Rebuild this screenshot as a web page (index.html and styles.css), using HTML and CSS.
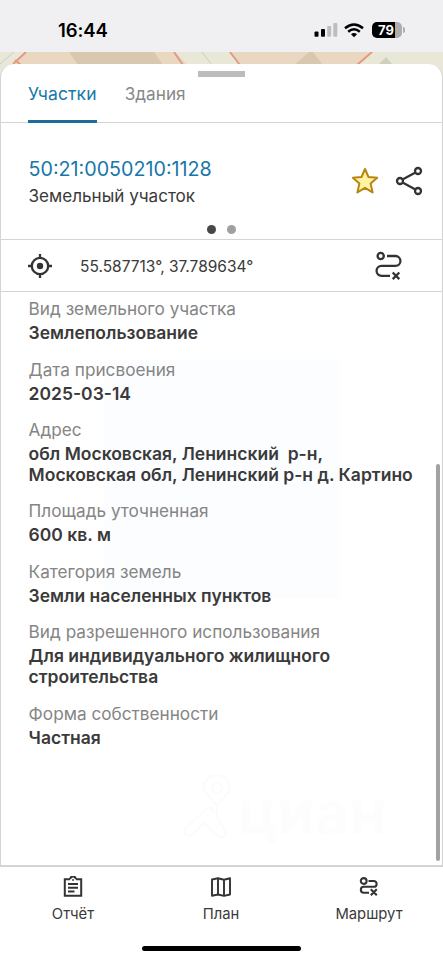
FILE: index.html
```html
<!DOCTYPE html>
<html lang="ru">
<head>
<meta charset="utf-8">
<meta name="viewport" content="width=device-width, initial-scale=1">
<title>Земельный участок</title>
<link rel="stylesheet" href="styles.css">
</head>
<body>
<div class="screen">
  <header class="status">
    <span class="time">16:44</span>
    <div class="indicators">
      <svg class="signal" width="24" height="16" viewBox="0 0 24 16"><rect x="0.5" y="9.5" width="4" height="5.2" rx="1"/><rect x="7" y="7" width="4" height="7.7" rx="1"/><g fill="#bdbdbe"><rect x="13.2" y="4" width="4" height="10.7" rx="1"/><rect x="19.3" y="1" width="4" height="13.7" rx="1"/></g></svg>
      <svg class="wifi" width="20" height="15" viewBox="0 0 20 15" fill="none" stroke="#000" stroke-width="2.5"><path d="M1 5.3Q10-2.4 19 5.3M4.2 8.8Q10 3.8 15.8 8.8"/><path d="M10 14.3 7 11.3Q10 8.9 13 11.3Z" fill="#000" stroke="none"/></svg>
      <div class="battery"><span class="level">79</span></div>
    </div>
  </header>
  <div class="map">
    <svg width="443" height="40" viewBox="0 0 443 40">
      <path fill="#e9e8d8" d="M0 0H443V40H0z"/>
      <path fill="#e9d7c2" d="M26 0H175L188 13V40H0V23zM230 0H372L358 13H242z"/>
      <path fill="#d9c8b0" d="M69 0H154L163 13H78zM294 13 309 0H313L323 13z"/>
      <path fill="#cfd0bd" d="m378 13 8-8 7 8z"/>
      <path fill="none" stroke="#e39a7f" stroke-width="2" d="M26 0 13 12M15 8l6 5M174 0l9 13M230 0l10 13M372 0l-15 13"/>
      <path fill="none" stroke="#cdcebb" d="M14 0 0 12M202 0l10 13"/>
    </svg>
  </div>
  <main class="sheet">
    <div class="handle"></div>
    <nav class="tabs"><span class="tab active">Участки</span><span class="tab">Здания</span></nav>
    <section class="object">
      <div class="object-row">
        <div class="title"><div class="number">50:21:0050210:1128</div><div class="kind">Земельный участок</div></div>
        <svg class="star" width="28" height="28" viewBox="0 0 28 28"><path d="m14 2 3.5 8 8.7.8-6.6 5.8 2 8.8-7.6-4.6-7.6 4.6 2-8.8-6.6-5.8 8.7-.8z" fill="#fff3a6" stroke="#b8860f" stroke-width="2" stroke-linejoin="round"/></svg>
        <svg class="share" width="28" height="30" viewBox="0 0 28 30" fill="none" stroke="#333" stroke-width="2.3"><circle cx="5" cy="15" r="3"/><circle cx="23" cy="5" r="3"/><circle cx="23" cy="25" r="3"/><path d="M8 13.3 20 6.7M8 16.7l12 6.6"/></svg>
      </div>
      <div class="dots"><i class="dot current"></i><i class="dot"></i></div>
    </section>
    <section class="coords">
      <svg class="target" width="24" height="24" viewBox="0 0 24 24" fill="none" stroke="#333" stroke-width="2.3"><circle cx="12" cy="12" r="8.2"/><circle cx="12" cy="12" r="3.2" fill="#333" stroke="none"/><path d="M12 0v4M12 20v4M0 12h4M20 12h4"/></svg>
      <span class="point">55.587713°, 37.789634°</span>
      <svg class="route" width="28" height="30" viewBox="0 0 28 30" fill="none" stroke="#333" stroke-width="2.3"><circle cx="5.7" cy="5" r="3.1"/><path d="M12 5h8.5a4.9 4.9 0 0 1 0 9.9H6.5a4.9 4.9 0 0 0 0 9.9H15M17.7 21.5l6.6 6.6M24.3 21.5l-6.6 6.6"/></svg>
    </section>
    <section class="details">
      <div class="tint"></div>
      <dl>
        <div class="item"><dt>Вид земельного участка</dt><dd>Землепользование</dd></div>
        <div class="item"><dt>Дата присвоения</dt><dd>2025-03-14</dd></div>
        <div class="item"><dt>Адрес</dt><dd>обл Московская, Ленинский&nbsp; р-н,<br>Московская обл, Ленинский р-н д. Картино</dd></div>
        <div class="item"><dt>Площадь уточненная</dt><dd>600 кв. м</dd></div>
        <div class="item"><dt>Категория земель</dt><dd>Земли населенных пунктов</dd></div>
        <div class="item"><dt>Вид разрешенного использования</dt><dd>Для индивидуального жилищного<br>строительства</dd></div>
        <div class="item"><dt>Форма собственности</dt><dd>Частная</dd></div>
      </dl>
      <div class="watermark"><svg width="50" height="68" viewBox="0 0 50 68" fill="none" stroke="#fbfbfb" stroke-width="2"><path d="M34 30Q21 17 21 13a13 13 0 0 1 26 0Q47 17 34 30v11l9 17q-4 8-10 1L21 48 9 60Q0 63 2 54L23 34q6-3 8 3"/><circle cx="34" cy="13" r="5"/></svg><span>циан</span></div>
      <div class="scrollbar"></div>
    </section>
  </main>
  <nav class="bottom">
    <div class="action"><svg width="22" height="22" viewBox="0 0 22 22" fill="none" stroke="#333" stroke-width="2"><path d="M8 3.3H2.8v16.4h16.4V3.3H14M8.2 3.3a2.8 2.8 0 0 1 5.6 0M6 8h10M6 11.7h10M6 15.4h6.5"/><circle cx="11" cy="4" r=".9" fill="#333" stroke="none"/></svg><span>Отчёт</span></div>
    <div class="action"><svg width="22" height="22" viewBox="0 0 22 22" fill="none" stroke="#333" stroke-width="1.9" stroke-linejoin="round"><path d="M2 3.5 8 2.3l6 1.4 6-1.4v16.2l-6 1.4-6-1.4-6 1.2zM8 2.3v16.2M14 3.7v16.2"/></svg><span>План</span></div>
    <div class="action"><svg width="22" height="22" viewBox="0 0 22 22" fill="none" stroke="#333" stroke-width="2.1"><circle cx="5.7" cy="5" r="2.9"/><path d="M10.5 5h5.2a2.9 2.9 0 0 1 0 5.8H5.8a2.9 2.9 0 0 0 0 5.9H11M12.8 13.3l6 6M18.8 13.3l-6 6"/></svg><span>Маршрут</span></div>
  </nav>
  <div class="home"></div>
</div>
</body>
</html>
```
FILE: styles.css
```css
* { box-sizing: border-box; }
body { margin: 0; font-family: Inter, "Liberation Sans", sans-serif; color: #3a3a3a; background: #fff; }
.screen { width: 443px; height: 960px; display: flex; flex-direction: column; overflow: hidden; }
.status { height: 52px; flex: none; background: #f0f0f2; display: flex; justify-content: space-between; padding: 18px 41px 0 58px; color: #000; }
.time { font-size: 18.5px; font-weight: 600; line-height: 24px; letter-spacing: -0.1px; }
.indicators { display: flex; align-items: center; height: 24px; }
.signal { margin-right: 6px; }
.wifi { margin-right: 8px; }
.battery { width: 30px; height: 16px; border-radius: 5px; background: linear-gradient(90deg, #000 78%, #adadae 78%); position: relative; }
.battery::after { content: ""; position: absolute; right: -3px; top: 5px; width: 2px; height: 6px; border-radius: 0 2px 2px 0; background: #adadae; }
.level { display: block; color: #fff; font-size: 13px; font-weight: 700; line-height: 16px; padding-left: 6px; }
.map { height: 12px; flex: none; }
.map svg { display: block; }
.sheet { height: 803px; flex: none; position: relative; background: #fff; border: 1px solid #d4d4d4; border-top: 0; border-radius: 14px 14px 0 0; display: flex; flex-direction: column; }
.handle { position: absolute; top: 7px; left: 197px; width: 47px; height: 6px; background: #bcbcbc; }
.tabs { height: 59px; flex: none; border-bottom: 1px solid #d4d4d4; padding-left: 27px; display: flex; gap: 28px; }
.tab { height: 59px; padding-top: 19px; line-height: 22px; font-size: 17.2px; color: #888; }
.tab.active { color: #1677a8; border-bottom: 3px solid #1a6d9c; font-size: 17.5px; letter-spacing: 0.1px; }
.object { height: 117px; flex: none; border-bottom: 1px solid #d4d4d4; padding-top: 33px; }
.object-row { display: flex; align-items: center; height: 52px; padding: 0 19px 0 27.5px; }
.title { flex: 1; }
.number { font-size: 19.7px; line-height: 27px; color: #1677a8; }
.kind { font-size: 17.1px; line-height: 25px; }
.star, .share { margin-top: -2px; }
.star { margin-right: 16px; }
.dots { display: flex; justify-content: center; gap: 11px; padding-top: 17px; }
.dot { width: 9px; height: 9px; border-radius: 50%; background: #a0a0a0; }
.dot.current { background: #484848; }
.coords { height: 52px; flex: none; border-bottom: 1px solid #d4d4d4; display: flex; align-items: center; padding: 0 39px 0 27px; }
.point { margin-left: 28px; padding-top: 1px; font-size: 15.5px; flex: 1; }
.details { flex: 1; min-height: 0; position: relative; border-bottom: 1px solid #d4d4d4; padding: 5px 0 0 27.6px; }
.tint { position: absolute; left: 103px; top: 68px; width: 236px; height: 238px; background: #fcfdff; }
dl { margin: 0; position: relative; display: flex; flex-direction: column; gap: 13.6px; }
dt { font-size: 17.2px; line-height: 24px; color: #858585; }
dd { margin: 2px 0 0; font-size: 17.5px; font-weight: 600; line-height: 20.9px; white-space: nowrap; }
.watermark { position: absolute; left: 182px; top: 483px; display: flex; align-items: flex-end; gap: 5px; color: #fdfdfd; }
.watermark span { font-size: 60px; font-weight: 700; line-height: 62px; }
.scrollbar { position: absolute; top: 172px; bottom: 4px; right: 2px; width: 4px; border-radius: 2px; background: #a2a2a2; }
.bottom { height: 78px; flex: none; display: grid; grid-template-columns: repeat(3, 148px); justify-content: center; padding: 9px 1px 0 0; background: #fff; }
.action { display: flex; flex-direction: column; align-items: center; font-size: 14.8px; line-height: 20px; gap: 6px; }
.home { width: 159px; height: 5px; margin: 1px auto 0; border-radius: 3px; background: #000; flex: none; }
```
